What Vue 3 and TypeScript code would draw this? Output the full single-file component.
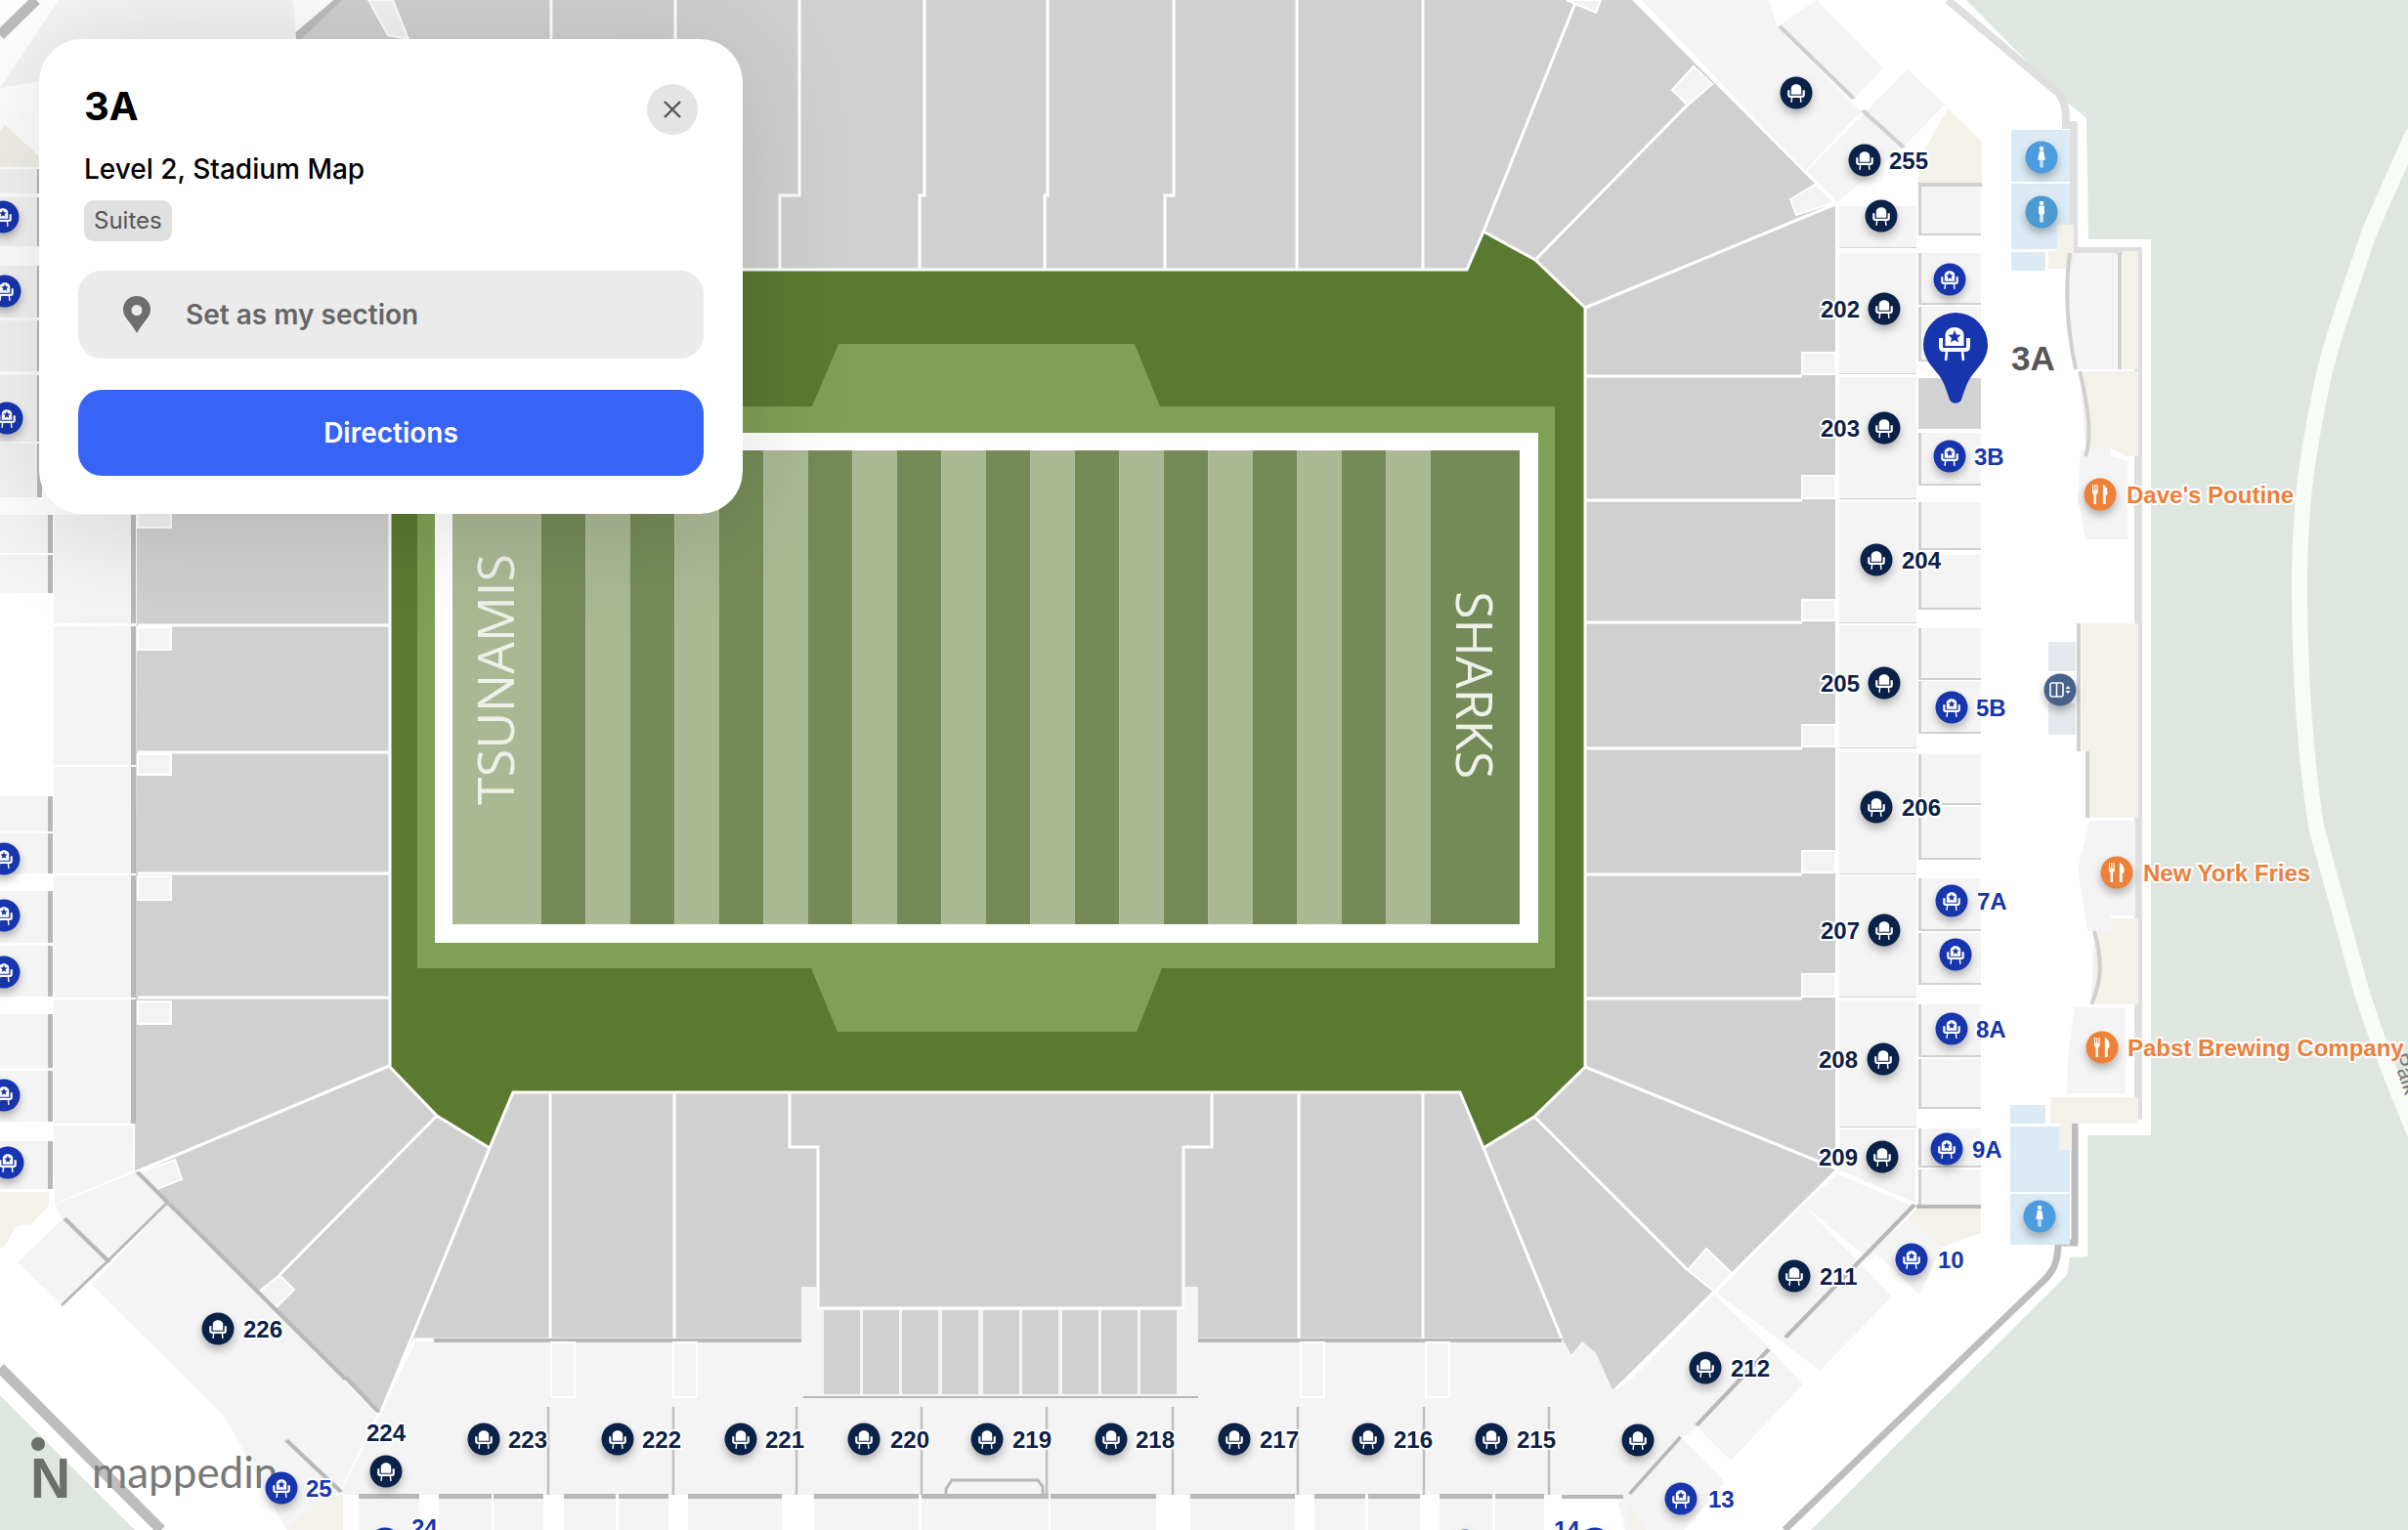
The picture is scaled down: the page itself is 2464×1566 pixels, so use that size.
<template>
  <div class="stage">
    <svg class="map" width="2464" height="1566" viewBox="0 0 2464 1566">
      <defs>
        <g id="chair">
          <path class="ico" d="M-9.5 3V-8C-9.5 -13 -5 -16 0 -16S9.5 -13 9.5 -8V3Z" />
          <path class="ico-line" d="M-14 -5V4C-14 6 -13 7 -11 7H11C13 7 14 6 14 4V-5" />
          <path class="ico-leg" d="M-8 9L-9 18M8 9L9 18" />
        </g>
        <g id="chair-star">
          <use href="#chair" />
          <path class="star" d="M0 -13L1.9 -8.6L6.6 -8.2L3 -5L4.1 -.4L0 -2.9L-4.1 -.4L-3 -5L-6.6 -8.2L-1.9 -8.6Z" />
        </g>
        <g id="cutlery">
          <path class="ico" d="M-8.5 -10.5H-7.3V-4.5H-6.1V-10.5H-4.9V-4.5H-3.7V-10.5H-2.5V-2.5C-2.5 -1 -3.4 -.3 -4.2 0V10.5H-6.8V0C-7.6 -.3 -8.5 -1 -8.5 -2.5Z" />
          <path class="ico" d="M3 -10.5C6 -9.5 8 -6 8 -1C8 .5 7.2 1 6 1V10.5H3Z" />
        </g>
        <g id="woman">
          <circle class="ico" cx="0" cy="-9.5" r="2.4" />
          <path class="ico" d="M-2.2 -6.5H2.2L4 3H1.6V11H.4V3H-.4V11H-1.6V3H-4Z" />
        </g>
        <g id="man">
          <circle class="ico" cx="0" cy="-9.5" r="2.4" />
          <path class="ico" d="M-3 -6.5H3V2H1.8V11H.3V3H-.3V11H-1.8V2H-3Z" />
        </g>
      </defs>

      <rect class="ground" width="2464" height="1566" />
      <path class="park-road" d="M2470 135L2425 236C2400 310 2385 350 2376 393C2360 470 2353 520 2353 600C2353 700 2360 780 2370 846L2414 1006C2430 1060 2450 1110 2475 1170" />
      <polygon class="floor" points="2012,0 2118,107 2135,121 2137,245 2201,245 2201,1162 2136,1162 2136,1286 2118,1287 2115,1305 1853,1566 138,1566 0,1428 0,0" />

      <path class="wall-light" d="M1993 0L2107 96C2113 104 2114 112 2114 128H2122V257H2188V1146" />
      <path class="wall-dark" d="M2188 1146H2123V1272H2106C2106 1290 2102 1300 2092 1310L1826 1566" />
      <path class="wall-dark wide" d="M0 1400L165 1566" />
      <path class="wall-dark wide" d="M0 36L37 0M199 25L225 0M303 40L350 0" />

      <polygon class="seat" points="350,0 1670,0 1878,209 1878,1197 1650,1423 1633,1385 1619,1373 1608,1387 1598,1370 423,1370 388,1447 138,1200 141,200" />
      <polyline v-for="(p, i) in seatLines" :key="'s' + i" class="seat-line" :points="p" />
      <polygon v-for="(p, i) in tabs" :key="'t' + i" class="tab" :points="p" />

      <polygon class="field" points="399,315 447,266 501,237 525,276 1501,276 1518,237 1571,266 1622,315 1622,1092 1570,1143 1518,1175 1494,1118 525,1118 501,1175 447,1142 399,1092" />
      <polygon class="turf" points="427,416 831,416 858,352 1161,352 1187,416 1591,416 1591,991 1189,991 1163,1056 857,1056 830,991 427,991" />
      <rect class="touch" x="445" y="443" width="1129" height="522" />
      <rect v-for="s in stripes" :key="s.x" :class="s.dark ? 'st-dark' : 'st-light'" :x="s.x" y="461" :width="s.w" height="485" />
      <text class="team" transform="translate(526 824) rotate(-90)">TSUNAMIS</text>
      <text class="team" transform="translate(1490 605) rotate(90)">SHARKS</text>

      <polygon v-for="(p, i) in lightBlocks" :key="'l' + i" class="light" :points="p" />
      <polygon v-for="(p, i) in beigeBlocks" :key="'b' + i" class="beige" :points="p" />
      <polygon v-for="(p, i) in blueBlocks" :key="'w' + i" class="wash" :points="p" />
      <polygon v-for="(p, i) in liftBlocks" :key="'e' + i" class="lift" :points="p" />
      <polygon v-for="(p, i) in softStrips" :key="'o' + i" class="soft-strip" :points="p" />
      <polygon v-for="(p, i) in stripBlocks" :key="'d' + i" class="strip" :points="p" />
      <polygon class="picked" points="1963,387 2027,387 2027,439 1963,439" />
      <path class="store-line" d="M2118 259C2112 300 2116 340 2124 378M2128 380C2138 420 2140 450 2134 467M2136 769V837M2143 953C2152 985 2150 1005 2140 1028M2169 259V378M2127 638V769" />
      <polyline v-for="(p, i) in bandLines" :key="'n' + i" class="band-line" :points="p" />
      <rect v-for="(b, i) in bandBoxes" :key="'x' + i" class="band-box" :x="b" y="1374" width="24" height="56" />
      <path class="notch" d="M968 1530V1524L974 1515H1062L1067 1522V1530H1073" />
      <rect v-for="(c, i) in smallSeats" :key="'c' + i" class="small-seat" :x="c" y="1341" width="37" height="86" rx="1" />

      <text class="park-label" transform="translate(2448 1081) rotate(72)">Palk</text>

      <g class="logo">
        <circle cx="39" cy="1478" r="7" />
        <text class="logo-n" x="31" y="1533">N</text>
        <text class="logo-word" x="94" y="1523">mappedin</text>
      </g>

      <g v-for="m in seatMarkers" :key="m.id" class="marker" :transform="`translate(${m.x} ${m.y})`">
        <circle r="16.5" :class="m.kind" />
        <use :href="m.kind === 'suite' ? '#chair-star' : '#chair'" transform="scale(.55)" />
      </g>
      <g v-for="m in otherMarkers" :key="m.id" class="marker" :transform="`translate(${m.x} ${m.y})`">
        <circle r="16.5" :class="m.kind" />
        <use :href="m.icon" transform="scale(.95)" />
      </g>
      <g class="marker" transform="translate(2108 706)">
        <circle r="16.5" class="lift-pin" />
        <rect class="lift-line" x="-10" y="-7" width="13" height="14" rx="2" />
        <path class="lift-line" d="M-3.5 -7V7" />
        <path class="ico" d="M8 -4L10.5 -1H5.5ZM8 4L10.5 1H5.5Z" />
      </g>

      <g class="pin" transform="translate(2001 353)">
        <path class="pin-body" d="M-33 0A33 33 0 1 1 33 0C33 14 24 22 17 31C11 39 9 48 6 56C4 61 -4 61 -6 56C-9 48 -11 39 -17 31C-24 22 -33 14 -33 0Z" />
        <use href="#chair-star" transform="translate(-1 -2)" />
      </g>

      <text v-for="l in labels" :key="l.text + l.x" class="label" :class="l.kind" :x="l.x" :y="l.y" :text-anchor="l.anchor">{{ l.text }}</text>
      <text class="label section" x="2058" y="379">3A</text>
    </svg>

    <aside class="panel">
      <button class="close" type="button" aria-label="Close">
        <svg width="20" height="20" viewBox="0 0 20 20"><path d="M2 2L18 18M18 2L2 18" /></svg>
      </button>
      <div class="info">
        <h1 class="title">3A</h1>
        <p class="place">Level 2, Stadium Map</p>
        <span class="badge">Suites</span>
      </div>
      <button class="action secondary" type="button">
        <svg width="28" height="38" viewBox="0 0 28 38">
          <path fill-rule="evenodd" d="M14 0C6 0 0 6 0 14C0 22 9 28 14 38C19 28 28 22 28 14C28 6 22 0 14 0ZM14 9A5.5 5.5 0 1 1 14 20A5.5 5.5 0 1 1 14 9Z" />
        </svg>
        <span>Set as my section</span>
      </button>
      <button class="action primary" type="button">Directions</button>
    </aside>
  </div>
</template>

<script setup lang="ts">
interface Marker {
  id: string
  x: number
  y: number
  kind: string
  icon?: string
}

interface Label {
  text: string
  x: number
  y: number
  kind: string
  anchor?: string
}

const box = (x1: number, y1: number, x2: number, y2: number): string =>
  `${x1},${y1} ${x2},${y1} ${x2},${y2} ${x1},${y2}`

const stripes = Array.from({ length: 23 }, (_, n) => {
  if (n === 0) return { x: 463, w: 91, dark: false }
  if (n === 22) return { x: 1464, w: 91, dark: true }
  return { x: 554 + (n - 1) * 45.5, w: 45.5, dark: n % 2 === 1 }
})

const seatLines: string[] = [
  '564,0 564,276',
  '691,0 691,276',
  '818,0 818,200 798,200 798,276',
  '946,0 946,200 941,200 941,276',
  '1072,0 1072,200 1069,200 1069,276',
  '1201,0 1201,200 1192,200 1192,276',
  '1327,0 1327,276',
  '1456,0 1456,276',
  '1518,237 1612,3',
  '1571,266 1726,108',
  '1622,315 1878,209',
  '1622,385 1844,385',
  '1622,512 1844,512',
  '1622,637 1844,637',
  '1622,766 1844,766',
  '1622,895 1844,895',
  '1622,1022 1844,1022',
  '398,514 141,514',
  '398,640 141,640',
  '398,770 141,770',
  '398,894 141,894',
  '398,1021 141,1021',
  '398,1091 138,1200',
  '447,1142 286,1305',
  '501,1175 390,1445',
  '1622,1092 1881,1197',
  '1570,1143 1727,1300',
  '1518,1175 1598,1370',
  '563,1118 563,1370',
  '690,1118 690,1370',
  '808,1118 808,1174 837,1174 837,1339 1211,1339 1211,1174 1240,1174 1240,1118',
  '1329,1118 1329,1370',
  '1456,1118 1456,1370',
  '423,1371 820,1371',
  '1226,1371 1598,1371',
]

const tabs: string[] = [
  box(1844, 361, 1878, 383),
  box(1844, 487, 1878, 510),
  box(1844, 614, 1878, 635),
  box(1844, 742, 1878, 764),
  box(1844, 871, 1878, 893),
  box(1844, 997, 1878, 1020),
  box(141, 516, 175, 540),
  box(141, 642, 175, 665),
  box(141, 772, 175, 793),
  box(141, 897, 175, 921),
  box(141, 1025, 175, 1048),
  '143,1200 179,1187 186,1207 161,1217',
  '265,1322 286,1305 301,1320 283,1338',
  '1727,1300 1746,1278 1772,1303 1754,1322',
  '1832,204 1857,189 1878,207 1838,220',
  '1733,68 1752,86 1727,108 1711,92',
  '1603,0 1638,0 1633,13',
  '377,0 402,0 418,40 397,36',
  '1882,1155 1961,1155 1961,1233 1881,1198',
]

const rightCol = [
  [1882, 211, 1961, 253],
  [1882, 259, 1961, 382],
  [1882, 386, 1961, 510],
  [1882, 514, 1961, 637],
  [1882, 640, 1961, 765],
  [1882, 770, 1961, 894],
  [1882, 896, 1961, 1020],
  [1882, 1024, 1961, 1153],
]
const rightSide = [
  [1966, 191, 2027, 239],
  [1966, 259, 2027, 310],
  [1966, 314, 2027, 368],
  [1966, 443, 2027, 495],
  [1966, 514, 2027, 561],
  [1966, 568, 2027, 622],
  [1966, 643, 2027, 694],
  [1966, 697, 2027, 749],
  [1966, 772, 2027, 822],
  [1966, 826, 2027, 878],
  [1966, 899, 2027, 951],
  [1966, 955, 2027, 1006],
  [1966, 1028, 2027, 1080],
  [1966, 1084, 2027, 1133],
  [1966, 1155, 2027, 1193],
  [1966, 1197, 2027, 1233],
]
const leftCols = [
  [55, 527, 134, 638],
  [55, 641, 134, 783],
  [55, 785, 134, 894],
  [55, 896, 134, 1021],
  [55, 1023, 134, 1150],
  [0, 173, 38, 198],
  [0, 202, 38, 252],
  [0, 272, 38, 325],
  [0, 328, 38, 380],
  [0, 384, 38, 452],
  [0, 454, 38, 509],
  [0, 527, 49, 566],
  [0, 568, 49, 607],
  [0, 815, 49, 851],
  [0, 853, 49, 894],
  [0, 912, 49, 965],
  [0, 968, 49, 1020],
  [0, 1038, 49, 1093],
  [0, 1096, 49, 1148],
  [0, 1168, 49, 1217],
]
const bottomCells = [
  [367, 429], [449, 503], [505, 556], [577, 630], [633, 684], [704, 800], [833, 940], [943, 1073],
  [1075, 1183], [1218, 1325], [1345, 1397], [1400, 1453], [1473, 1527], [1530, 1580],
]

const lightBlocks: string[] = [
  ...rightCol.map(([a, b, c, d]) => box(a, b, c, d)),
  ...rightSide.map(([a, b, c, d]) => box(a, b, c, d)),
  ...leftCols.map(([a, b, c, d]) => box(a, b, c, d)),
  ...bottomCells.map(([a, b]) => box(a, 1534, b, 1566)),
  // top right and bottom right diagonals
  '1819,27 1859,0 1927,70 1895,102',
  '1680,0 1810,0 1819,29 1904,114 1847,175',
  '1908,116 1946,152 1880,207 1849,175',
  '1952,71 1990,107 1946,152 1909,114',
  '1881,1202 1958,1235 1914,1290 1845,1233',
  '1845,1233 1936,1327 1862,1403 1757,1323',
  '1666,1415 1754,1325 1812,1380 1738,1460 1721,1472',
  '1845,1417 1771,1495 1738,1462 1812,1382',
  '1633,1447 1665,1415 1765,1517 1723,1566 1663,1566',
  '1953,1247 1986,1277 1964,1325 1917,1280',
  '1598,1373 1608,1387 1619,1373 1633,1385 1650,1423 1666,1415 1633,1447',
  // bottom left diagonals
  '56,1233 138,1200 171,1233 110,1293 64,1248',
  '64,1248 110,1293 64,1337 18,1292',
  '171,1233 352,1413 270,1490 94,1315',
  '352,1413 385,1448 347,1528 291,1475 270,1490',
  '291,1475 347,1528 293,1566 230,1450',
  '55,1152 136,1152 136,1198 56,1232',
  // over the panel top corner
  '60,0 300,0 303,40 0,90',
  // concourse shops and the bottom band
  '425,1373 1598,1373 1633,1447 1669,1530 347,1530 388,1450',
  '820,1317 836,1317 836,1340 1212,1340 1212,1317 1226,1317 1226,1430 820,1430',
  '2118,259 2166,259 2166,378 2124,378 2116,320',
  '2129,459 2160,459 2160,467 2177,472 2177,552 2134,552 2126,510',
  '2138,840 2185,840 2185,937 2160,937 2160,953 2136,953 2126,890',
  '2123,1031 2175,1031 2175,1119 2115,1119 2116,1080',
]
const beigeBlocks: string[] = [
  '1963,187 1963,165 1993,111 2028,145 2028,187',
  '2172,257 2188,257 2188,378 2172,378',
  '2128,380 2188,380 2188,467 2177,467 2160,459 2134,459',
  '2130,638 2188,638 2188,837 2138,837 2138,769 2130,769',
  '2143,953 2160,953 2160,940 2188,940 2188,1028 2140,1028',
  '2096,257 2122,257 2122,275 2096,275',
  '2105,230 2122,230 2122,257 2105,257',
  '2098,1123 2188,1123 2188,1150 2120,1150 2120,1177 2107,1177 2107,1150 2098,1150',
  '1961,1236 2027,1236 2027,1262 1986,1277 1953,1247',
  '0,1220 50,1220 50,1234 32,1253 16,1255 4,1277 0,1277',
  '5,128 40,160 40,171 0,171 0,135',
  '327,1537 347,1530 351,1530 351,1566 293,1566',
  '1685,1566 1665,1536 1669,1566',
]
const blueBlocks: string[] = [
  box(2058, 133, 2118, 186),
  '2058,188 2118,188 2118,230 2105,230 2105,255 2058,255',
  box(2058, 258, 2093, 277),
  box(2057, 1131, 2093, 1150),
  '2057,1153 2107,1153 2107,1177 2118,1177 2118,1220 2057,1220',
  box(2057, 1222, 2118, 1274),
]
const liftBlocks: string[] = [box(2096, 657, 2124, 687), box(2096, 720, 2124, 752)]
const softStrips: string[] = [
  ...rightSide.map(([, b, , d]) => box(1963, b, 1966, d)),
  ...rightSide.map(([, , , d]) => box(1963, d, 2027, d + 2)),
  ...rightCol.map(([a, , c, d]) => box(a, d, c, d + 1)),
  box(1963, 187, 2028, 191),
  '1819,28 1895,102 1899,100 1823,26',
  '1904,114 1946,152 1950,150 1908,112',
]
const stripBlocks: string[] = [
  ...leftCols.map(([, b, c, d]) => box(c, b, c + 5, d)),
  box(1961, 1233, 2027, 1237),
  box(444, 1370, 820, 1374),
  box(1226, 1370, 1598, 1374),
  box(822, 1429, 1226, 1431),
  ...bottomCells.map(([a, b]) => box(a, 1529, b, 1534)),
  '171,1233 138,1200 143,1199 174,1230',
  '171,1233 352,1413 356,1411 175,1231',
  '352,1411 385,1446 389,1444 356,1409',
  '1961,1234 1829,1370 1825,1368 1957,1232',
  '1812,1382 1738,1460 1734,1458 1808,1380',
  '1721,1472 1669,1530 1666,1528 1718,1470',
  '64,1248 110,1293 114,1291 68,1246',
  '171,1233 110,1293 108,1291 169,1231',
  '110,1293 64,1337 62,1335 108,1291',
  '291,1475 347,1528 351,1526 295,1473',
  '1661,1530 1598,1530 1598,1534 1661,1534',
]
const bandLines: string[] = [561, 689, 815, 943, 1071, 1200, 1328, 1457, 1585].map((x) => `${x},1440 ${x},1530`)
const bandBoxes: number[] = [564, 689, 1331, 1459]
const smallSeats: number[] = [843, 883, 923, 964, 1006, 1046, 1087, 1127, 1167]

const navy: number[][] = [
  [1838, 95], [1908, 164], [1925, 221], [1928, 316], [1928, 438], [1920, 573], [1928, 699], [1920, 826],
  [1928, 952], [1927, 1084], [1926, 1184], [1836, 1306], [1745, 1400], [1676, 1474], [223, 1360], [395, 1506],
  [495, 1473], [632, 1473], [758, 1473], [884, 1473], [1010, 1473], [1137, 1473], [1263, 1473], [1400, 1473], [1526, 1473],
]
const suites: number[][] = [
  [1995, 286], [1995, 467], [1997, 724], [1997, 922], [2001, 977], [1997, 1053], [1992, 1176], [1956, 1289],
  [1720, 1534], [288, 1523], [394, 1580], [1632, 1580], [1499, 1582], [3, 222], [5, 298], [7, 428], [4, 879],
  [4, 937], [4, 995], [4, 1121], [8, 1190],
]
const seatMarkers: Marker[] = [
  ...navy.map(([x, y], i) => ({ id: `n${i}`, x, y, kind: 'section' })),
  ...suites.map(([x, y], i) => ({ id: `u${i}`, x, y, kind: 'suite' })),
]
const otherMarkers: Marker[] = [
  { id: 'dave', x: 2149, y: 506, kind: 'food', icon: '#cutlery' },
  { id: 'fries', x: 2166, y: 893, kind: 'food', icon: '#cutlery' },
  { id: 'pabst', x: 2151, y: 1072, kind: 'food', icon: '#cutlery' },
  { id: 'w1', x: 2089, y: 161, kind: 'wc', icon: '#woman' },
  { id: 'm1', x: 2089, y: 217, kind: 'wc dim', icon: '#man' },
  { id: 'w2', x: 2087, y: 1245, kind: 'wc', icon: '#woman' },
]

const nav = (text: string, x: number, y: number, anchor = 'start'): Label => ({ text, x, y, kind: 'nav', anchor })
const blue = (text: string, x: number, y: number, anchor = 'start'): Label => ({ text, x, y, kind: 'blue', anchor })
const food = (text: string, x: number, y: number): Label => ({ text, x, y, kind: 'orange', anchor: 'start' })

const labels: Label[] = [
  nav('255', 1933, 173),
  nav('202', 1903, 325, 'end'),
  nav('203', 1903, 447, 'end'),
  nav('204', 1946, 582),
  nav('205', 1903, 708, 'end'),
  nav('206', 1946, 835),
  nav('207', 1903, 961, 'end'),
  nav('208', 1901, 1093, 'end'),
  nav('209', 1901, 1193, 'end'),
  nav('211', 1862, 1315),
  nav('212', 1771, 1409),
  nav('226', 249, 1369),
  nav('224', 375, 1475),
  nav('223', 520, 1482),
  nav('222', 657, 1482),
  nav('221', 783, 1482),
  nav('220', 911, 1482),
  nav('219', 1036, 1482),
  nav('218', 1162, 1482),
  nav('217', 1289, 1482),
  nav('216', 1426, 1482),
  nav('215', 1552, 1482),
  blue('3B', 2020, 476),
  blue('5B', 2022, 733),
  blue('7A', 2023, 931),
  blue('8A', 2022, 1062),
  blue('9A', 2018, 1185),
  blue('10', 1983, 1298),
  blue('13', 1748, 1543),
  blue('25', 313, 1532),
  blue('24', 421, 1572),
  blue('14', 1590, 1574),
  food("Dave's Poutine", 2176, 515),
  food('New York Fries', 2193, 902),
  food('Pabst Brewing Company', 2177, 1081),
]
</script>

<style>
html,
body {
  margin: 0;
  overflow: hidden;
}
</style>

<style scoped>
.stage {
  position: relative;
  width: 2464px;
  height: 1566px;
  overflow: hidden;
  font-family: Inter, "Liberation Sans", sans-serif;
}
.map {
  display: block;
}
.ground {
  fill: #dfe6df;
}
.floor {
  fill: #fff;
}
.park-road {
  fill: none;
  stroke: #f9fbf9;
  stroke-width: 16;
}
.wall-light {
  fill: none;
  stroke: #dfdfdf;
  stroke-width: 8;
}
.wall-dark {
  fill: none;
  stroke: #bdbdbd;
  stroke-width: 7;
}
.wall-dark.wide {
  stroke-width: 11;
}
.seat {
  fill: #d0d0d0;
}
.seat-line {
  fill: none;
  stroke: #fff;
  stroke-width: 3;
}
.tab {
  fill: #f3f3f3;
  stroke: #fff;
  stroke-width: 2;
}
.field {
  fill: #5a7a30;
  stroke: #fff;
  stroke-width: 3;
}
.turf {
  fill: #80a055;
}
.touch {
  fill: #fff;
}
.st-dark {
  fill: #768a57;
}
.st-light {
  fill: #abb894;
}
.team {
  font-family: "Open Sans", sans-serif;
  font-size: 52px;
  font-weight: 400;
  fill: #eef1e9;
}
.light {
  fill: #f4f4f4;
}
.beige {
  fill: #f3f1ea;
}
.wash {
  fill: #dbeaf4;
}
.lift {
  fill: #e5e8ec;
}
.strip {
  fill: #b8b8b8;
}
.soft-strip {
  fill: #d0d0d0;
}
.picked {
  fill: #d2d2d2;
}
.store-line {
  fill: none;
  stroke: #d0d0d0;
  stroke-width: 4;
}
.band-line {
  fill: none;
  stroke: #c0c0c0;
  stroke-width: 2.5;
}
.band-box {
  fill: #f4f4f4;
  stroke: #fff;
  stroke-width: 2;
}
.notch {
  fill: none;
  stroke: #b8b8b8;
  stroke-width: 3;
}
.small-seat {
  fill: #d0d0d0;
}
.park-label {
  font-family: "Liberation Sans", sans-serif;
  font-size: 22px;
  fill: #777;
}
.logo {
  fill: #6c706b;
}
.logo-n {
  font-family: "Liberation Sans", sans-serif;
  font-size: 57px;
  font-weight: 700;
}
.logo-word {
  font-family: Lato, sans-serif;
  font-size: 44px;
  font-weight: 400;
  fill: #7a7a7a;
}
.marker {
  filter: drop-shadow(0 5px 4px rgba(0, 0, 0, 0.28));
}
.section {
  fill: #0a2148;
}
.suite {
  fill: #1735ac;
}
.food {
  fill: #ed8139;
}
.wc {
  fill: #4e9ce0;
}
.wc.dim {
  fill: #4b9ad0;
}
.lift-pin {
  fill: #48638a;
}
.lift-line {
  fill: none;
  stroke: #fff;
  stroke-width: 1.6;
}
.ico {
  fill: #fff;
}
.ico-line {
  fill: none;
  stroke: #fff;
  stroke-width: 4;
}
.ico-leg {
  fill: none;
  stroke: #fff;
  stroke-width: 2.6;
}
.star {
  fill: #1735ac;
}
.pin-body {
  fill: #1735ac;
}
.label {
  font-family: "Liberation Sans", sans-serif;
  font-size: 24px;
  font-weight: 700;
  paint-order: stroke;
  stroke: #fff;
  stroke-width: 4px;
  stroke-linejoin: round;
}
.label.nav {
  fill: #0c2148;
}
.label.blue {
  fill: #1735ac;
}
.label.orange {
  fill: #ec7f3b;
}
.label.section {
  font-size: 35px;
  fill: #575757;
}
.panel {
  position: absolute;
  top: 40px;
  left: 40px;
  width: 720px;
  height: 486px;
  box-sizing: border-box;
  padding: 0 40px;
  border-radius: 44px;
  background: #fff;
  box-shadow: 0 10px 120px rgba(0, 0, 0, 0.14);
}
.close {
  position: absolute;
  top: 46px;
  right: 46px;
  width: 52px;
  height: 52px;
  padding: 0;
  border: none;
  border-radius: 50%;
  background: #e4e4e4;
  display: flex;
  align-items: center;
  justify-content: center;
}
.close path {
  fill: none;
  stroke: #555;
  stroke-width: 2.4;
}
.info {
  display: flex;
  flex-direction: column;
  align-items: flex-start;
  padding: 44px 6px 0;
  height: 237px;
  box-sizing: border-box;
}
.title {
  margin: 0;
  font-size: 40px;
  line-height: 50px;
  font-weight: 700;
  color: #000;
}
.place {
  margin: 20px 0 0;
  font-size: 28px;
  line-height: 38px;
  font-weight: 500;
  color: #000;
}
.badge {
  margin-top: 13px;
  height: 42px;
  padding: 0 10px;
  border-radius: 10px;
  background: #e0e0e0;
  color: #555;
  font-size: 24px;
  line-height: 42px;
}
.action {
  display: flex;
  align-items: center;
  width: 640px;
  border: none;
  border-radius: 24px;
  font-family: inherit;
  font-size: 28px;
  font-weight: 600;
}
.secondary {
  height: 90px;
  gap: 36px;
  padding: 0 0 0 46px;
  background: #ebebeb;
  color: #666;
}
.secondary path {
  fill: #6e6e6e;
}
.primary {
  height: 88px;
  margin-top: 32px;
  justify-content: center;
  background: #3864f5;
  color: #fff;
}
</style>
